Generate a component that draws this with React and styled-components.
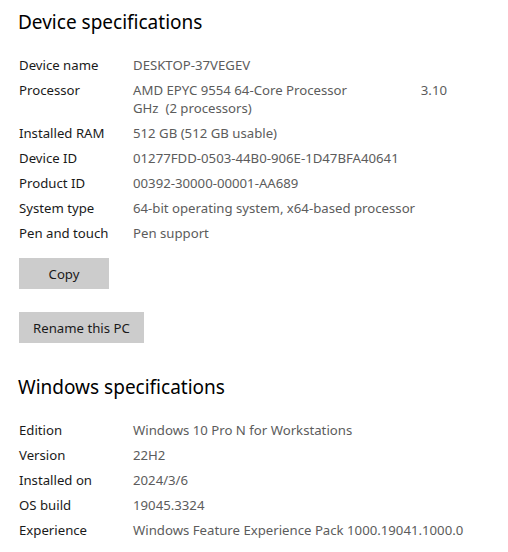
import React from 'react';
import styled, { createGlobalStyle } from 'styled-components';

const GlobalStyle = createGlobalStyle`
  html, body {
    margin: 0;
    padding: 0;
    background: #ffffff;
  }
  body {
    font-family: "Segoe UI", "Noto Sans", "Open Sans", sans-serif;
    -webkit-font-smoothing: antialiased;
  }
`;

const Page = styled.div`
  width: 508px;
  height: 552px;
  overflow: hidden;
  padding: 8px 0 0 18px;
  box-sizing: border-box;
`;

const Title = styled.h2`
  margin: 0 0 ${p => p.$gap || 20}px;
  font-size: 19px;
  line-height: 28px;
  font-weight: 400;
  color: #000;
`;

const SpecList = styled.div`
  display: flex;
  flex-direction: column;
  gap: 7px;
`;

const Row = styled.div`
  display: grid;
  grid-template-columns: 114px 1fr;
  font-size: 13.2px;
  line-height: 18px;
  padding-left: 1px;
`;

const Label = styled.div`
  color: #1a1a1a;
`;

const Value = styled.div`
  color: #5c5c5c;
`;

const SplitLine = styled.div`
  display: flex;
  justify-content: space-between;
  width: 314px;
`;

const Buttons = styled.div`
  display: flex;
  flex-direction: column;
  align-items: flex-start;
  gap: 23px;
  margin: 16px 0 30px 1px;
`;

const Button = styled.button`
  height: 31px;
  min-width: ${p => p.$min || 0}px;
  padding: 0 14px;
  border: none;
  background: #cccccc;
  color: #1a1a1a;
  font-family: inherit;
  font-size: 13.2px;
  cursor: pointer;
`;

const device = [
  ['Device name', 'DESKTOP-37VEGEV'],
  ['Processor', null],
  ['Installed RAM', '512 GB (512 GB usable)'],
  ['Device ID', '01277FDD-0503-44B0-906E-1D47BFA40641'],
  ['Product ID', '00392-30000-00001-AA689'],
  ['System type', '64-bit operating system, x64-based processor'],
  ['Pen and touch', 'Pen support'],
];

const windows = [
  ['Edition', 'Windows 10 Pro N for Workstations'],
  ['Version', '22H2'],
  ['Installed on', '2024/3/6'],
  ['OS build', '19045.3324'],
  ['Experience', 'Windows Feature Experience Pack 1000.19041.1000.0'],
];

const renderRows = rows =>
  rows.map(([label, value]) => (
    <Row key={label}>
      <Label>{label}</Label>
      {value === null ? (
        <Value>
          <SplitLine>
            <span>AMD EPYC 9554 64-Core Processor</span>
            <span>3.10</span>
          </SplitLine>
          <div>GHz&nbsp; (2 processors)</div>
        </Value>
      ) : (
        <Value>{value}</Value>
      )}
    </Row>
  ));

export default function App() {
  return (
    <Page>
      <GlobalStyle />
      <Title>Device specifications</Title>
      <SpecList>{renderRows(device)}</SpecList>
      <Buttons>
        <Button $min={90}>Copy</Button>
        <Button>Rename this PC</Button>
      </Buttons>
      <Title $gap={20}>Windows specifications</Title>
      <SpecList>{renderRows(windows)}</SpecList>
    </Page>
  );
}
